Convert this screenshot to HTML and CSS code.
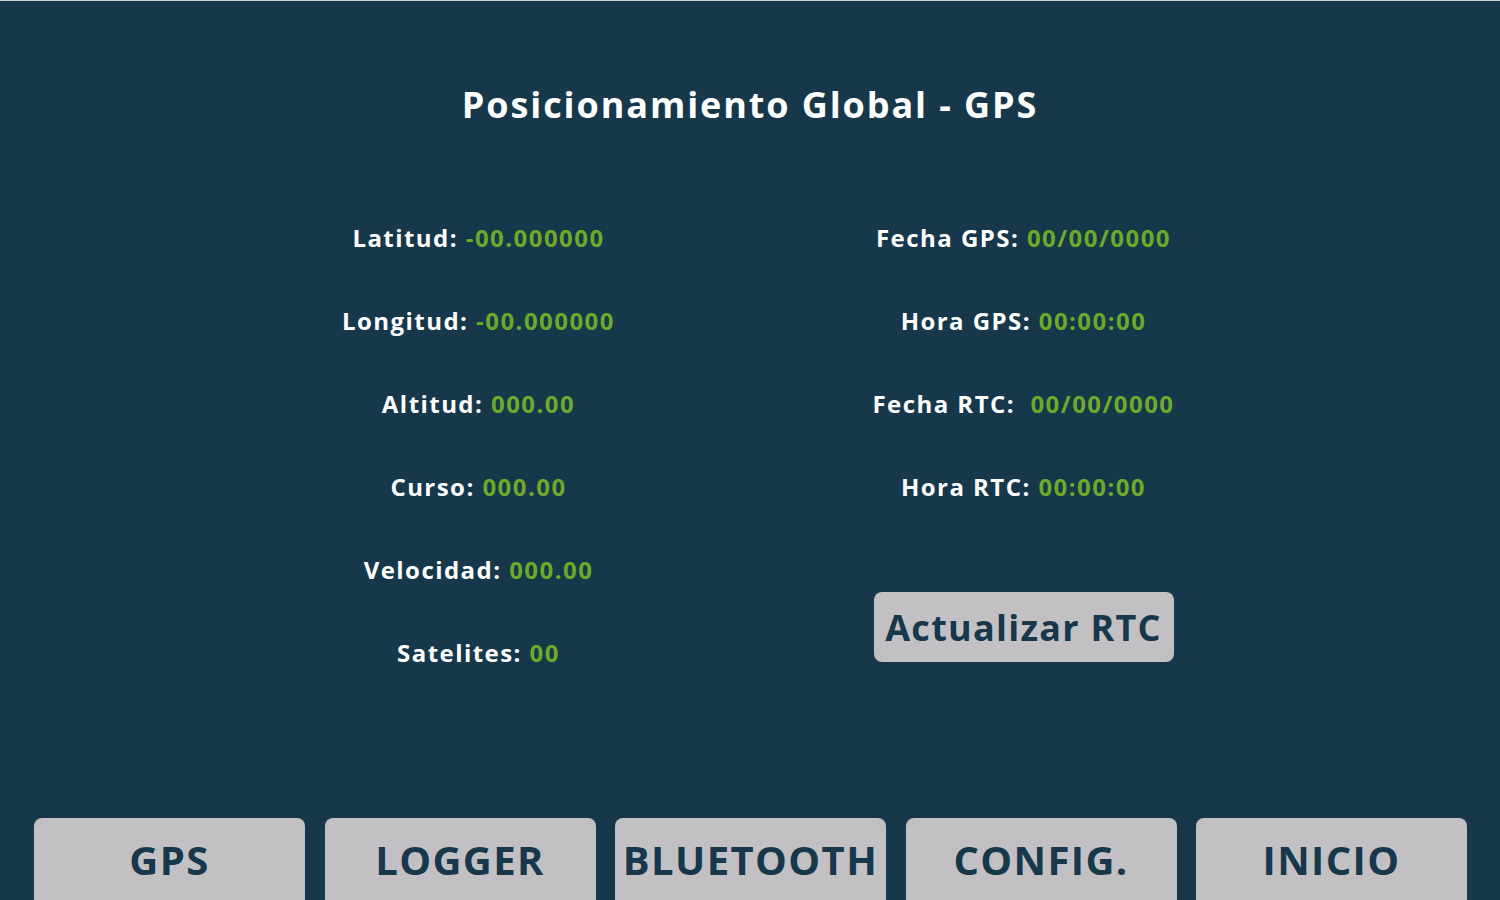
FILE: index.html
```html
<!DOCTYPE html>
<html lang="es">
<head>
<meta charset="utf-8">
<title>Posicionamiento Global - GPS</title>
<link rel="stylesheet" href="styles.css">
</head>
<body>
<div class="screen">
  <h1 class="title">Posicionamiento Global - GPS</h1>
  <div class="columns">
    <div class="col">
      <div class="row"><span class="label">Latitud:</span> <span class="val">-00.000000</span></div>
      <div class="row"><span class="label">Longitud:</span> <span class="val">-00.000000</span></div>
      <div class="row"><span class="label">Altitud:</span> <span class="val">000.00</span></div>
      <div class="row"><span class="label">Curso:</span> <span class="val">000.00</span></div>
      <div class="row"><span class="label">Velocidad:</span> <span class="val">000.00</span></div>
      <div class="row"><span class="label">Satelites:</span> <span class="val">00</span></div>
    </div>
    <div class="col">
      <div class="row"><span class="label">Fecha GPS:</span> <span class="val">00/00/0000</span></div>
      <div class="row"><span class="label">Hora GPS:</span> <span class="val">00:00:00</span></div>
      <div class="row"><span class="label">Fecha RTC:&nbsp;</span> <span class="val">00/00/0000</span></div>
      <div class="row"><span class="label">Hora RTC:</span> <span class="val">00:00:00</span></div>
      <button class="action">Actualizar RTC</button>
    </div>
  </div>
  <nav class="nav">
    <button class="tab">GPS</button>
    <button class="tab">LOGGER</button>
    <button class="tab">BLUETOOTH</button>
    <button class="tab">CONFIG.</button>
    <button class="tab">INICIO</button>
  </nav>
</div>
</body>
</html>
```

FILE: styles.css
```css
html, body {
  margin: 0;
  padding: 0;
  background: #17374b;
  overflow: hidden;
}
.screen {
  width: 1500px;
  height: 899px;
  border-top: 1px solid #d2d2d2;
  background: #17374b;
  font-family: "Open Sans", "DejaVu Sans", sans-serif;
  color: #ffffff;
  overflow: hidden;
}
.title {
  margin: 79px 0 0;
  height: 50px;
  line-height: 50px;
  text-align: center;
  font-size: 36px;
  font-weight: 700;
  letter-spacing: 1.9px;
}
.columns {
  display: grid;
  grid-template-columns: 1fr 1fr;
  padding: 0 204px 0 206px;
  margin-top: 65.5px;
}
.col {
  display: flex;
  flex-direction: column;
  align-items: center;
}
.row {
  height: 83px;
  line-height: 83px;
  font-size: 24px;
  font-weight: 700;
  letter-spacing: 1.45px;
  white-space: pre;
}
.val {
  color: #6bab29;
}
.action {
  margin-top: 64.5px;
  width: 300px;
  height: 70px;
  border: none;
  border-radius: 8px;
  background: #c2c0c3;
  color: #17374b;
  font-family: inherit;
  font-size: 36px;
  font-weight: 700;
  letter-spacing: 1.25px;
  padding: 0;
}
.nav {
  display: grid;
  grid-template-columns: repeat(5, 271px);
  column-gap: 19.5px;
  padding: 0 33px 0 34px;
  margin-top: 124.5px;
}
.tab {
  height: 100px;
  border: none;
  border-radius: 8px;
  background: #c2c0c3;
  color: #17374b;
  font-family: inherit;
  font-size: 40px;
  font-weight: 700;
  letter-spacing: 1.4px;
  padding: 17px 0 0;
  line-height: 50px;
  display: flex;
  justify-content: center;
  align-items: flex-start;
}
```
